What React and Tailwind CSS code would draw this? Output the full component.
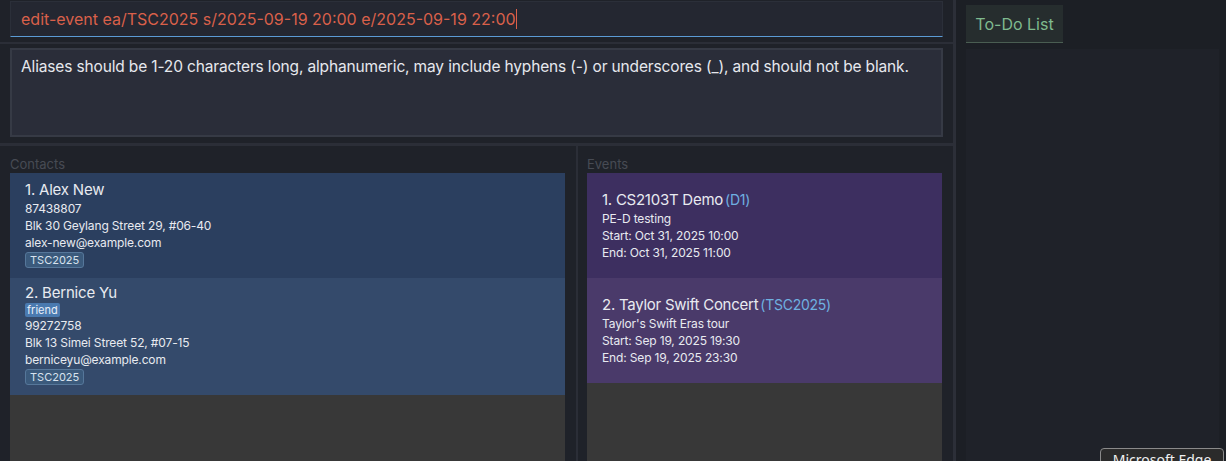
const contacts = [
  {
    name: '1. Alex New',
    phone: '87438807',
    address: 'Blk 30 Geylang Street 29, #06-40',
    email: 'alex-new@example.com',
    tags: [],
    aliases: ['TSC2025'],
    bg: 'bg-[#2b3f5f]',
    h: 'h-[105px] pt-[7px]',
  },
  {
    name: '2. Bernice Yu',
    phone: '99272758',
    address: 'Blk 13 Simei Street 52, #07-15',
    email: 'berniceyu@example.com',
    tags: ['friend'],
    aliases: ['TSC2025'],
    bg: 'bg-[#344a6b]',
    h: 'h-[117px] pt-[5px]',
  },
];

const events = [
  {
    title: '1. CS2103T Demo',
    alias: '(D1)',
    desc: 'PE-D testing',
    start: 'Start: Oct 31, 2025 10:00',
    end: 'End: Oct 31, 2025 11:00',
    bg: 'bg-[#3d2f60]',
  },
  {
    title: '2. Taylor Swift Concert',
    alias: '(TSC2025)',
    desc: "Taylor's Swift Eras tour",
    start: 'Start: Sep 19, 2025 19:30',
    end: 'End: Sep 19, 2025 23:30',
    bg: 'bg-[#4a3a6a]',
  },
];

const detail = 'text-[12px] leading-[17px] tracking-[-0.15px]';

function ContactCard({ c }) {
  return (
    <div className={`${c.bg} ${c.h} pl-[15px] text-[#e8eaf0]`}>
      <p className="text-[15px] leading-[20px] tracking-[-0.2px]">{c.name}</p>
      {c.tags.map((t) => (
        <div key={t} className="flex">
          <span className="bg-[#4a7ab0] rounded-[2px] px-[2px] text-[11px] leading-[14px] text-[#e8eef8]">
            {t}
          </span>
        </div>
      ))}
      <p className={detail}>{c.phone}</p>
      <p className={detail}>{c.address}</p>
      <p className={detail}>{c.email}</p>
      {c.aliases.map((a) => (
        <div key={a} className="flex mt-[1px]">
          <span className="bg-[#3b5a7c] border border-[#56779a] rounded-[3px] px-[4px] text-[11px] leading-[14px] text-[#d8e2ee]">
            {a}
          </span>
        </div>
      ))}
    </div>
  );
}

function EventCard({ e }) {
  return (
    <div className={`${e.bg} h-[105px] pl-[15px] pt-[17px] text-[#e8eaf0]`}>
      <p className="text-[15px] leading-[20px] tracking-[-0.25px]">
        {e.title}
        <span className="text-[14px] text-[#6fb0e0] ml-[2px]">{e.alias}</span>
      </p>
      <p className={detail}>{e.desc}</p>
      <p className={detail}>{e.start}</p>
      <p className={detail}>{e.end}</p>
    </div>
  );
}

export default function App() {
  return (
    <div
      className="relative w-[1226px] h-[461px] overflow-hidden flex bg-[#1f2229]"
      style={{ fontFamily: 'Inter, "Noto Sans", sans-serif' }}
    >
      <div className="w-[953px] flex flex-col">
        <div className="px-[10px] pt-[1px]">
          <div className="h-[36px] bg-[#242731] border border-[#2b2f39] border-b-[#5b9bd5] flex items-center pl-[10px]">
            <span className="text-[16px] text-[#d9604a] leading-[20px]">
              edit-event ea/TSC2025 s/2025-09-19 20:00 e/2025-09-19 22:00
            </span>
            <span className="w-[1px] h-[20px] bg-[#d9604a]" />
          </div>
        </div>
        <div className="h-[11px] flex flex-col justify-center">
          <div className="h-[2px] bg-[#2b2e37]" />
        </div>
        <div className="px-[10px]">
          <div className="h-[89px] bg-[#2a2d39] border-2 border-[#363a45] pl-[9px] pt-[6px]">
            <p className="text-[15.5px] leading-[22px] tracking-[-0.15px] text-[#e6e8ee] whitespace-nowrap">
              Aliases should be 1-20 characters long, alphanumeric, may include hyphens (-) or underscores (_), and should not be blank.
            </p>
          </div>
        </div>
        <div className="h-[9px] flex flex-col justify-end">
          <div className="h-[3px] bg-[#2b2e37]" />
        </div>
        <div className="flex-1 flex">
          <div className="w-[576px] pl-[10px] pr-[11px] flex flex-col">
            <p className="h-[27px] pt-[10px] text-[13px] leading-[17px] text-[#474b54]">Contacts</p>
            <div className="flex-1 bg-[#383838]">
              {contacts.map((c) => (
                <ContactCard key={c.name} c={c} />
              ))}
            </div>
          </div>
          <div className="w-[2px] bg-[#2b2e37]" />
          <div className="flex-1 pl-[9px] pr-[11px] flex flex-col">
            <p className="h-[27px] pt-[10px] text-[13px] leading-[17px] text-[#474b54]">Events</p>
            <div className="flex-1 bg-[#383838]">
              {events.map((e) => (
                <EventCard key={e.title} e={e} />
              ))}
            </div>
          </div>
        </div>
      </div>
      <div className="w-[3px] bg-[#2c2f38]" />
      <div className="flex-1 bg-[#1c1f25] pl-[10px] pr-[7px] pt-[5px] flex flex-col">
        <div className="w-[97px] h-[38px] bg-[#262d2e] border-b border-[#4a5d52] flex items-center justify-center">
          <span className="text-[16px] text-[#7fba8e]">To-Do List</span>
        </div>
        <div className="flex-1 mt-[6px] bg-[#1f2229]" />
      </div>
      <div className="absolute left-[1100px] top-[448px] w-[124px] h-[20px] bg-[#2b2b2b] border border-[#8a8a8a] rounded-t-[4px] flex justify-center pt-[3px]">
        <span className="text-[14px] leading-[16px] text-[#f0f0f0]" style={{ fontFamily: '"Noto Sans", sans-serif' }}>
          Microsoft Edge
        </span>
      </div>
    </div>
  );
}
